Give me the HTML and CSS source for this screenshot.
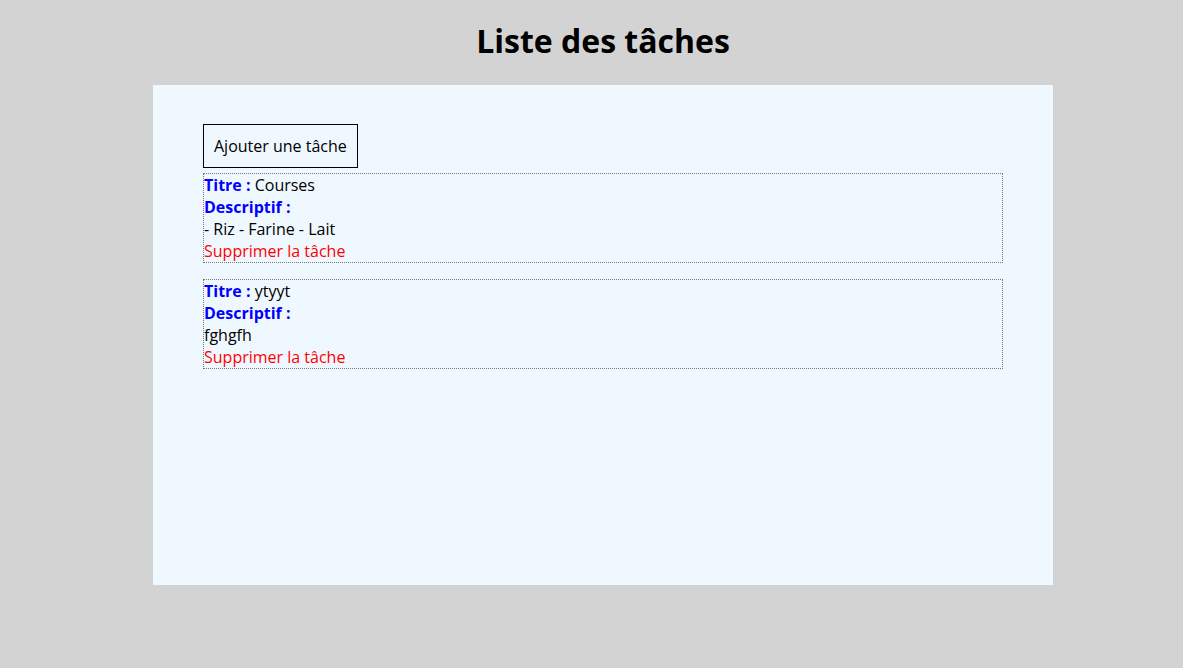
FILE: index.html
```html
<!DOCTYPE html>
<html lang="fr">
<head>
<meta charset="utf-8">
<title>Liste des tâches</title>
<link rel="stylesheet" href="styles.css">
</head>
<body>
<div class="page">
  <h1 class="title">Liste des tâches</h1>
  <main class="panel">
    <button class="add-btn" type="button">Ajouter une tâche</button>
    <div class="task">
      <div><span class="label">Titre :</span> Courses</div>
      <div class="label">Descriptif :</div>
      <div>- Riz - Farine - Lait</div>
      <a class="delete" href="#">Supprimer la tâche</a>
    </div>
    <div class="task">
      <div><span class="label">Titre :</span> ytyyt</div>
      <div class="label">Descriptif :</div>
      <div>fghgfh</div>
      <a class="delete" href="#">Supprimer la tâche</a>
    </div>
  </main>
</div>
</body>
</html>
```
FILE: styles.css
```css
html, body {
  margin: 0;
  padding: 0;
  background: #d3d3d3;
}
body {
  font-family: "Open Sans", "Liberation Sans", sans-serif;
  font-size: 16px;
  color: #000;
}
.page {
  width: 900px;
  margin: 0 0 0 153px;
  padding-top: 19px;
}
.title {
  margin: 0 0 22px;
  font-size: 32px;
  line-height: 44px;
  font-weight: 700;
  text-align: center;
}
.panel {
  display: block;
  box-sizing: border-box;
  height: 500px;
  background: #f0f8ff;
  padding: 39px 50px 0;
}
.add-btn {
  display: block;
  font-family: inherit;
  font-size: 16px;
  line-height: 22px;
  color: #000;
  background: transparent;
  border: 1px solid #000;
  padding: 10px;
  margin: 0 0 5px;
  border-radius: 0;
}
.task {
  border: 1px dotted #777;
  line-height: 22px;
  margin-bottom: 16px;
}
.label {
  color: #0000ff;
  font-weight: 700;
}
.delete {
  display: block;
  color: #ff0000;
  text-decoration: none;
}
```
